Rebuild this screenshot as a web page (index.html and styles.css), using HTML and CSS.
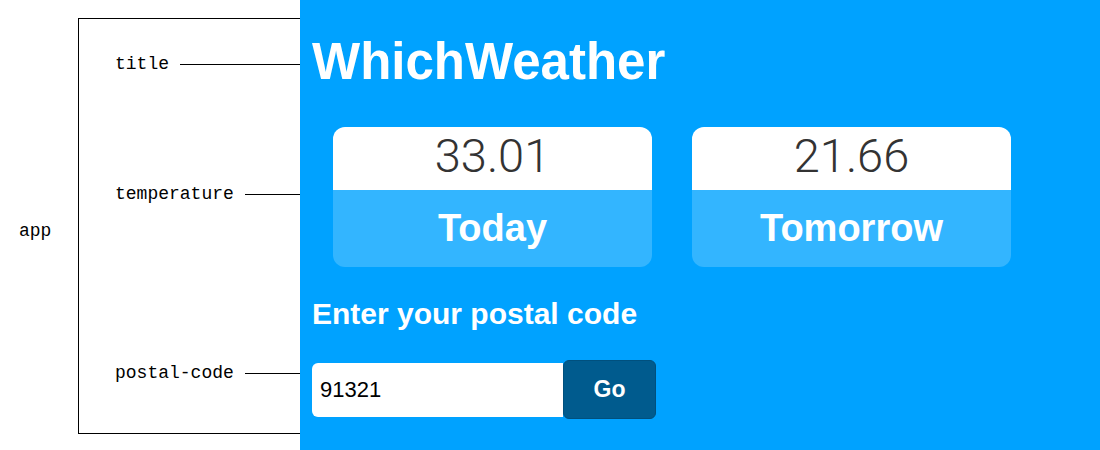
FILE: index.html
```html
<!DOCTYPE html>
<html>
<head>
<meta charset="utf-8">
<link rel="stylesheet" href="styles.css">
</head>
<body>
<div class="page">
  <div class="annot">
    <div class="app-label">app</div>
    <div class="box">
      <div class="row row-title"><span class="lbl">title</span><span class="line"></span></div>
      <div class="row row-temp"><span class="lbl">temperature</span><span class="line"></span></div>
      <div class="row row-postal"><span class="lbl">postal-code</span><span class="line"></span></div>
    </div>
  </div>
  <div class="panel">
    <h1 class="title">WhichWeather</h1>
    <div class="cards">
      <div class="card">
        <div class="temp">33.01</div>
        <div class="day">Today</div>
      </div>
      <div class="card">
        <div class="temp">21.66</div>
        <div class="day">Tomorrow</div>
      </div>
    </div>
    <h2 class="prompt">Enter your postal code</h2>
    <form class="form">
      <input class="zip" type="text" value="91321">
      <button class="go" type="button">Go</button>
    </form>
  </div>
</div>
</body>
</html>
```

FILE: styles.css
```css
html, body {
  margin: 0;
  padding: 0;
  background: #fff;
}
.page {
  display: flex;
  width: 1100px;
  height: 450px;
  overflow: hidden;
}
.annot {
  width: 300px;
  display: flex;
  align-items: flex-start;
  font-family: "Liberation Mono", "Courier New", monospace;
  font-size: 18px;
  line-height: 20px;
  color: #000;
}
.app-label {
  width: 59px;
  padding-left: 19px;
  margin-top: 221px;
}
.box {
  flex: 1;
  margin-top: 18px;
  height: 414px;
  border: 1px solid #000;
  border-right: none;
  display: flex;
  flex-direction: column;
  padding-left: 36px;
}
.row {
  display: flex;
  align-items: center;
  height: 20px;
}
.row-title { margin-top: 35px; }
.row-temp { margin-top: 110px; }
.row-postal { margin-top: 159px; }
.lbl {
  white-space: nowrap;
}
.line {
  flex: 1;
  height: 1px;
  background: #000;
  margin-left: 11px;
}
.panel {
  flex: 1;
  background: #00a2ff;
  padding: 36px 12px 0;
  font-family: "Liberation Sans", Arial, Helvetica, sans-serif;
  color: #fff;
}
.title {
  margin: 0;
  font-size: 51px;
  line-height: 51px;
  font-weight: bold;
}
.cards {
  display: flex;
  gap: 40px;
  margin: 40px 0 0 21px;
}
.card {
  width: 319px;
  border-radius: 12px;
  overflow: hidden;
}
.temp {
  background: #fff;
  color: #333;
  text-align: center;
  font-family: Roboto, "Liberation Sans", sans-serif;
  font-weight: 300;
  font-size: 47px;
  line-height: 57px;
  padding-bottom: 6px;
}
.day {
  background: #33b5ff;
  text-align: center;
  font-weight: bold;
  font-size: 38px;
  line-height: 77px;
}
.prompt {
  margin: 32px 0 0;
  font-size: 30px;
  line-height: 30px;
  font-weight: bold;
}
.form {
  display: flex;
  align-items: center;
  margin: 31px 0 0;
}
.zip {
  box-sizing: border-box;
  width: 251px;
  height: 54px;
  border: none;
  border-radius: 6px 0 0 6px;
  padding: 0 8px;
  font-family: "Liberation Sans", Arial, sans-serif;
  font-size: 22px;
  color: #000;
  background: #fff;
  outline: none;
}
.go {
  box-sizing: border-box;
  width: 93px;
  height: 59px;
  border: 1px solid #00507e;
  border-radius: 6px;
  background: #005b8e;
  color: #fff;
  font-family: "Liberation Sans", Arial, sans-serif;
  font-weight: bold;
  font-size: 23px;
  padding: 0;
}
```
